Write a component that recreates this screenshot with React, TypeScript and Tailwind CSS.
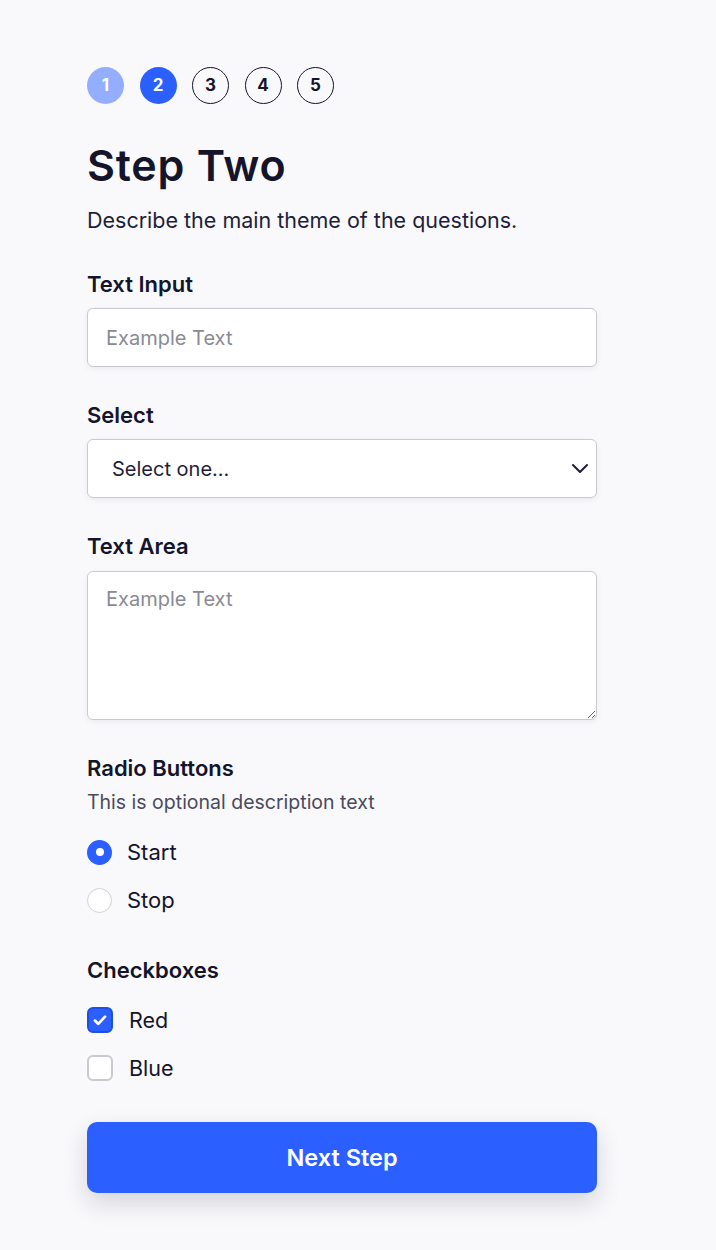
import React from "react";

const steps = [1, 2, 3, 4, 5];

function StepDot({ n }: { n: number }) {
  if (n === 1)
    return (
      <div className="w-[37px] h-[37px] rounded-full bg-[#94aeff] text-white flex items-center justify-center text-[17px] font-bold">
        {n}
      </div>
    );
  if (n === 2)
    return (
      <div className="w-[37px] h-[37px] rounded-full bg-[#2b5fff] text-white flex items-center justify-center text-[17px] font-bold">
        {n}
      </div>
    );
  return (
    <div className="w-[37px] h-[37px] rounded-full border border-[#14142b] text-[#14142b] flex items-center justify-center text-[17px] font-bold">
      {n}
    </div>
  );
}

export default function App() {
  return (
    <div
      className="min-h-[1250px] bg-[#f9f9fc] text-[#14142b]"
      style={{ fontFamily: "Inter, 'Noto Sans', sans-serif" }}
    >
      <div className="w-[510px] ml-[87px] pt-[67px]">
        <div className="flex gap-[15.5px]">
          {steps.map((n) => (
            <StepDot key={n} n={n} />
          ))}
        </div>

        <h1 className="mt-[35px] text-[43px] leading-[52px] font-semibold tracking-[0.8px]">Step Two</h1>
        <p className="mt-[14px] text-[21.5px] leading-[30px] text-[#1e1e3a]">
          Describe the main theme of the questions.
        </p>

        <label className="block mt-[34px] text-[22px] leading-[30px] font-semibold">Text Input</label>
        <input
          type="text"
          placeholder="Example Text"
          className="mt-[9px] w-full h-[59px] rounded-[6px] border border-[#c9c9d0] bg-white px-[18px] text-[20px] placeholder:text-[#8a8a94] shadow-[0_2px_6px_rgba(20,20,43,0.06)] outline-none"
        />

        <label className="block mt-[33px] text-[22px] leading-[30px] font-semibold">Select</label>
        <div className="relative mt-[9px]">
          <select
            className="appearance-none w-full h-[59px] rounded-[6px] border border-[#c9c9d0] bg-white pl-[24px] text-[20px] text-[#1e1e3a] shadow-[0_2px_6px_rgba(20,20,43,0.06)] outline-none"
            defaultValue=""
          >
            <option value="">Select one...</option>
          </select>
          <svg
            className="absolute right-[8px] top-[23px] pointer-events-none"
            width="18"
            height="12"
            viewBox="0 0 18 12"
            fill="none"
          >
            <path d="M2 3l7 7 7-7" stroke="#1e1e3a" strokeWidth="2" strokeLinecap="round" strokeLinejoin="round" />
          </svg>
        </div>

        <label className="block mt-[33px] text-[22px] leading-[30px] font-semibold">Text Area</label>
        <textarea
          placeholder="Example Text"
          className="block mt-[10px] w-full h-[149px] rounded-[6px] border border-[#c9c9d0] bg-white px-[18px] py-[13px] text-[20px] leading-[28px] placeholder:text-[#8a8a94] shadow-[0_2px_6px_rgba(20,20,43,0.06)] outline-none resize-y"
        />

        <div className="mt-[33px] text-[22px] leading-[30px] font-semibold">Radio Buttons</div>
        <div className="mt-[6px] text-[19.5px] leading-[26px] text-[#4a4a5c]">This is optional description text</div>

        <div className="mt-[23px] flex flex-col gap-[20px]">
          <div className="flex items-center gap-[15px] h-[28px]">
            <div className="w-[25px] h-[25px] rounded-full bg-[#2b5fff] flex items-center justify-center">
              <div className="w-[8px] h-[8px] rounded-full bg-white" />
            </div>
            <span className="text-[22px]">Start</span>
          </div>
          <div className="flex items-center gap-[15px] h-[28px]">
            <div className="w-[25px] h-[25px] rounded-full border border-[#d0d0d8] bg-white" />
            <span className="text-[22px]">Stop</span>
          </div>
        </div>

        <div className="mt-[41px] text-[22px] leading-[30px] font-semibold">Checkboxes</div>
        <div className="mt-[21px] flex flex-col gap-[20px]">
          <div className="flex items-center gap-[16px] h-[28px]">
            <div className="w-[26px] h-[26px] rounded-[6px] bg-[#2b5fff] border-[2px] border-[#1f4fe0] flex items-center justify-center">
              <svg width="18" height="18" viewBox="0 0 16 16" fill="none">
                <path d="M3.5 8.5l3 3 6-6.5" stroke="white" strokeWidth="2.4" strokeLinecap="round" strokeLinejoin="round" />
              </svg>
            </div>
            <span className="text-[21.5px]">Red</span>
          </div>
          <div className="flex items-center gap-[16px] h-[28px]">
            <div className="w-[26px] h-[26px] rounded-[6px] bg-white border-[2px] border-[#c9c9d0]" />
            <span className="text-[21.5px]">Blue</span>
          </div>
        </div>

        <button className="mt-[40px] w-full h-[71px] rounded-[10px] bg-[#2b5fff] text-white text-[23.5px] font-semibold shadow-[0_10px_24px_rgba(20,20,43,0.16)]">
          Next Step
        </button>
      </div>
    </div>
  );
}
